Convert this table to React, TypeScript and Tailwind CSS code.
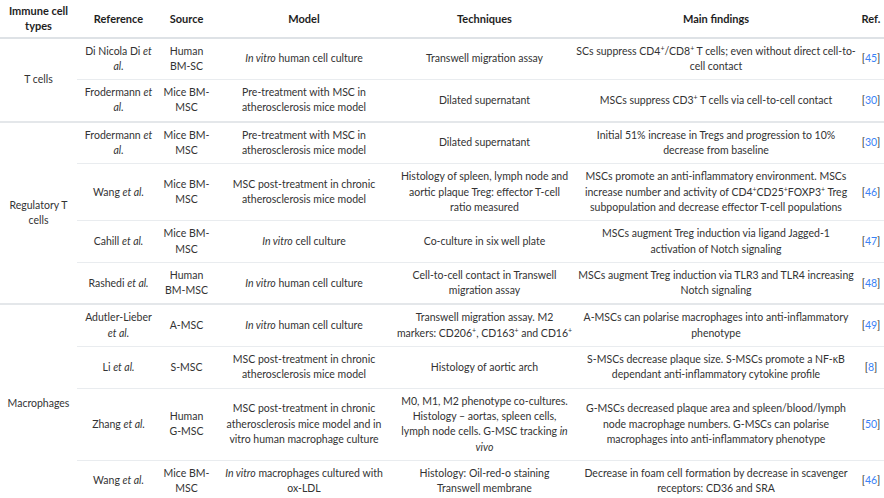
import React from 'react';

type Lines = React.ReactNode[];

type Row = {
    reference: Lines;
    source: Lines;
    model: Lines;
    techniques: Lines;
    findings: Lines;
    cite: string;
};

type Group = { name: Lines; rows: Row[] };

const Sup = ({ children }: { children: React.ReactNode }) => (
    <span className="relative -top-[4px] text-[7px] leading-none">{children}</span>
);

const groups: Group[] = [
    {
        name: ['T cells'],
        rows: [
            {
                reference: [<>Di Nicola Di <i>et</i></>, <i>al.</i>],
                source: ['Human', 'BM-SC'],
                model: [<><i>In vitro</i> human cell culture</>],
                techniques: ['Transwell migration assay'],
                findings: [<>SCs suppress CD4<Sup>+</Sup>/CD8<Sup>+</Sup> T cells; even without direct cell-to-</>, 'cell contact'],
                cite: '45',
            },
            {
                reference: [<>Frodermann <i>et</i></>, <i>al.</i>],
                source: ['Mice BM-', 'MSC'],
                model: ['Pre-treatment with MSC in', 'atherosclerosis mice model'],
                techniques: ['Dilated supernatant'],
                findings: [<>MSCs suppress CD3<Sup>+</Sup> T cells via cell-to-cell contact</>],
                cite: '30',
            },
        ],
    },
    {
        name: ['Regulatory T', 'cells'],
        rows: [
            {
                reference: [<>Frodermann <i>et</i></>, <i>al.</i>],
                source: ['Mice BM-', 'MSC'],
                model: ['Pre-treatment with MSC in', 'atherosclerosis mice model'],
                techniques: ['Dilated supernatant'],
                findings: ['Initial 51% increase in Tregs and progression to 10%', 'decrease from baseline'],
                cite: '30',
            },
            {
                reference: [<>Wang <i>et al.</i></>],
                source: ['Mice BM-', 'MSC'],
                model: ['MSC post-treatment in chronic', 'atherosclerosis mice model'],
                techniques: ['Histology of spleen, lymph node and', 'aortic plaque Treg: effector T-cell', 'ratio measured'],
                findings: [
                    'MSCs promote an anti-inflammatory environment. MSCs',
                    <>increase number and activity of CD4<Sup>+</Sup>CD25<Sup>+</Sup>FOXP3<Sup>+</Sup> Treg</>,
                    'subpopulation and decrease effector T-cell populations',
                ],
                cite: '46',
            },
            {
                reference: [<>Cahill <i>et al.</i></>],
                source: ['Mice BM-', 'MSC'],
                model: [<><i>In vitro</i> cell culture</>],
                techniques: ['Co-culture in six well plate'],
                findings: ['MSCs augment Treg induction via ligand Jagged-1', 'activation of Notch signaling'],
                cite: '47',
            },
            {
                reference: [<>Rashedi <i>et al.</i></>],
                source: ['Human', 'BM-MSC'],
                model: [<><i>In vitro</i> human cell culture</>],
                techniques: ['Cell-to-cell contact in Transwell', 'migration assay'],
                findings: ['MSCs augment Treg induction via TLR3 and TLR4 increasing', 'Notch signaling'],
                cite: '48',
            },
        ],
    },
    {
        name: ['Macrophages'],
        rows: [
            {
                reference: ['Adutler-Lieber', <i>et al.</i>],
                source: ['A-MSC'],
                model: [<><i>In vitro</i> human cell culture</>],
                techniques: [
                    'Transwell migration assay. M2',
                    <>markers: CD206<Sup>+</Sup>, CD163<Sup>+</Sup> and CD16<Sup>+</Sup></>,
                ],
                findings: ['A-MSCs can polarise macrophages into anti-inflammatory', 'phenotype'],
                cite: '49',
            },
            {
                reference: [<>Li <i>et al.</i></>],
                source: ['S-MSC'],
                model: ['MSC post-treatment in chronic', 'atherosclerosis mice model'],
                techniques: ['Histology of aortic arch'],
                findings: ['S-MSCs decrease plaque size. S-MSCs promote a NF-κB', 'dependant anti-inflammatory cytokine profile'],
                cite: '8',
            },
            {
                reference: [<>Zhang <i>et al.</i></>],
                source: ['Human', 'G-MSC'],
                model: ['MSC post-treatment in chronic', 'atherosclerosis mice model and in', 'vitro human macrophage culture'],
                techniques: [
                    'M0, M1, M2 phenotype co-cultures.',
                    'Histology – aortas, spleen cells,',
                    <>lymph node cells. G-MSC tracking <i>in</i></>,
                    <i>vivo</i>,
                ],
                findings: [
                    'G-MSCs decreased plaque area and spleen/blood/lymph',
                    'node macrophage numbers. G-MSCs can polarise',
                    'macrophages into anti-inflammatory phenotype',
                ],
                cite: '50',
            },
            {
                reference: [<>Wang <i>et al.</i></>],
                source: ['Mice BM-', 'MSC'],
                model: [<><i>In vitro</i> macrophages cultured with</>, 'ox-LDL'],
                techniques: ['Histology: Oil-red-o staining', 'Transwell membrane'],
                findings: ['Decrease in foam cell formation by decrease in scavenger', 'receptors: CD36 and SRA'],
                cite: '46',
            },
        ],
    },
];

const headers: Lines[] = [
    ['Immune cell', 'types'],
    ['Reference'],
    ['Source'],
    ['Model'],
    ['Techniques'],
    ['Main findings'],
    ['Ref.'],
];

function Stack({ lines }: { lines: Lines }) {
    return (
        <>
            {lines.map((l, i) => (
                <React.Fragment key={i}>
                    {i > 0 && <br />}
                    {l}
                </React.Fragment>
            ))}
        </>
    );
}

export default function App() {
    return (
        <div className="w-[884px] h-[498px] overflow-hidden bg-white font-['Lato','Liberation_Sans',sans-serif] text-[10.5px] leading-[15.3px] text-[#333]">
            <table className="w-[884px] table-fixed border-collapse text-center whitespace-nowrap">
                <colgroup>
                    <col className="w-[77px]" />
                    <col className="w-[83px]" />
                    <col className="w-[53px]" />
                    <col className="w-[182px]" />
                    <col className="w-[179px]" />
                    <col className="w-[284px]" />
                    <col className="w-[26px]" />
                </colgroup>
                <thead>
                    <tr>
                        {headers.map((h, i) => (
                            <th
                                key={i}
                                className="px-0 py-[3px] text-[11px] font-bold text-[#1e1e1e] border-b-2 border-[#dee2e6] align-middle"
                            >
                                <Stack lines={h} />
                            </th>
                        ))}
                    </tr>
                </thead>
                <tbody>
                    {groups.map((g, gi) =>
                        g.rows.map((r, i) => {
                            const last = i === g.rows.length - 1;
                            const cell = last
                                ? 'px-0 py-[5px] align-middle border-b-2 border-[#e4e7ea]'
                                : 'px-0 py-[5px] align-middle border-b border-[#e9ecef]';
                            return (
                                <tr key={gi + '-' + i}>
                                    {i === 0 && (
                                        <td
                                            rowSpan={g.rows.length}
                                            className="px-0 py-[5px] align-middle border-b-2 border-[#e4e7ea]"
                                        >
                                            <Stack lines={g.name} />
                                        </td>
                                    )}
                                    <td className={cell}><Stack lines={r.reference} /></td>
                                    <td className={cell}><Stack lines={r.source} /></td>
                                    <td className={cell}><Stack lines={r.model} /></td>
                                    <td className={cell}><Stack lines={r.techniques} /></td>
                                    <td className={cell}><Stack lines={r.findings} /></td>
                                    <td className={cell}>
                                        [<span className="text-[#3b82f6]">{r.cite}</span>]
                                    </td>
                                </tr>
                            );
                        })
                    )}
                </tbody>
            </table>
        </div>
    );
}
